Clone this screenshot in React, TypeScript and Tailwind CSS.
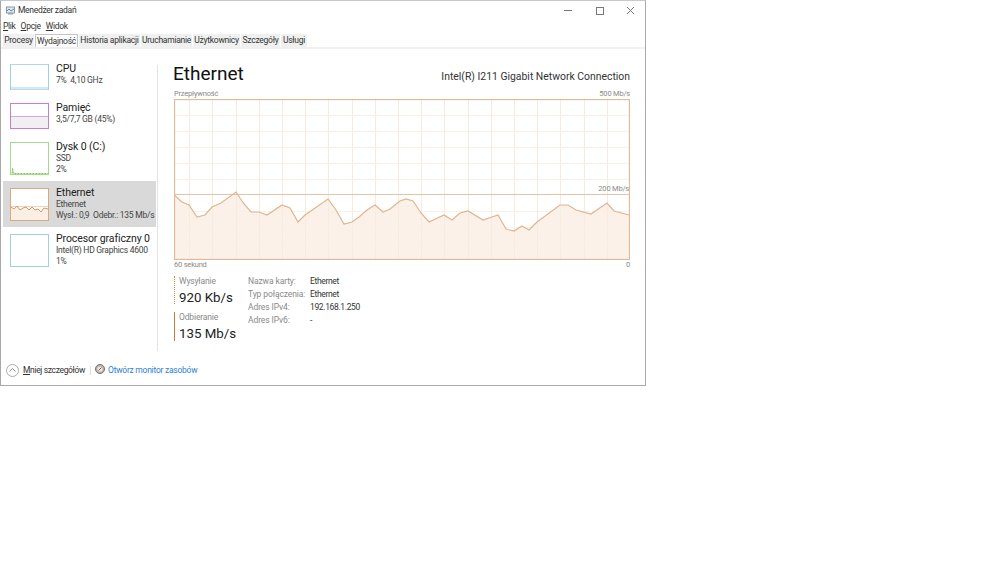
const font = { fontFamily: 'Roboto, "Noto Sans", sans-serif' };

const tabs = [
  { label: "Procesy", w: "w-[31px]" },
  { label: "Wydajność", w: "w-[43px]" },
  { label: "Historia aplikacji", w: "w-[61px]" },
  { label: "Uruchamianie", w: "w-[51px]" },
  { label: "Użytkownicy", w: "w-[47px]" },
  { label: "Szczegóły", w: "w-[39px]" },
  { label: "Usługi", w: "w-[26px]" },
];

const points = [
  [0, 96], [8, 103], [15, 106], [23, 118], [31, 116], [38, 108], [47, 104], [62, 93], [70, 105], [77, 113],
  [85, 113], [93, 116], [108, 106], [116, 109], [124, 123], [131, 116], [154, 100], [162, 111], [170, 125],
  [178, 123], [185, 118], [193, 111], [201, 106], [209, 113], [216, 110], [226, 102], [232, 100], [239, 102],
  [247, 114], [255, 123], [270, 116], [278, 121], [286, 114], [294, 112], [309, 121], [324, 116], [332, 130],
  [340, 132], [348, 127], [355, 131], [363, 123], [386, 106], [394, 106], [402, 111], [417, 115], [433, 104],
  [440, 112], [455, 116],
];

const line = points.map((p) => p.join(",")).join(" ");

const Chart = () => {
  const vertical = [15, 38, 62, 85, 108, 131, 154, 178, 201, 224, 247, 270, 294, 317, 340, 363, 386, 410, 433];
  const horizontal = [16, 32, 48, 64, 80, 112, 128, 144];
  return (
    <svg width="456" height="161" viewBox="0 0 456 161" className="block">
      <polygon points={`0,160 ${line} 455,160`} fill="#fbf1e9" />
      {vertical.map((x) => (
        <line key={x} x1={x + 0.5} y1="0" x2={x + 0.5} y2="160" stroke="#f7ebdf" />
      ))}
      {horizontal.map((y) => (
        <line key={y} x1="0" y1={y + 0.5} x2="455" y2={y + 0.5} stroke="#f9f0e8" />
      ))}
      <line x1="0" y1="95.5" x2="455" y2="95.5" stroke="#e5c3a5" />
      <polyline points={line} fill="none" stroke="#dfb591" strokeWidth="1.2" />
      <rect x="0.5" y="0.5" width="455" height="160" fill="none" stroke="#e2b999" strokeWidth="1.3" />
    </svg>
  );
};

const Thumb = ({ kind }: { kind: string }) => {
  if (kind === "cpu" || kind === "gpu") {
    return (
      <svg width="39" height="33" viewBox="0 0 39 33" className={`block shrink-0 ${kind === "cpu" ? "h-[26px]" : ""}`} preserveAspectRatio="none">
        <rect x="0.5" y="0.5" width="38" height="32" fill="#fff" stroke="#9fcdea" />
        {kind === "cpu" && <rect x="1" y="29" width="37" height="3" fill="#d5e8f4" />}
      </svg>
    );
  }
  if (kind === "mem") {
    return (
      <svg width="39" height="26" viewBox="0 0 39 26" className="block shrink-0">
        <rect x="1" y="14" width="37" height="11" fill="#f2eff2" />
        <line x1="1" y1="13.5" x2="38" y2="13.5" stroke="#d6a8dd" />
        <rect x="0.5" y="0.5" width="38" height="25" fill="none" stroke="#c77fd4" />
      </svg>
    );
  }
  if (kind === "disk") {
    return (
      <svg width="39" height="33" viewBox="0 0 39 33" className="block shrink-0">
        <rect x="0.5" y="0.5" width="38" height="32" fill="#fff" stroke="#a6d98c" />
        <polyline points="2,31.5 2.5,26 3.5,31.5 38,31.5" fill="#cfeabf" stroke="#7cc455" strokeWidth="1" strokeDasharray="2 1" />
      </svg>
    );
  }
  return (
    <svg width="39" height="33" viewBox="0 0 39 33" className="block shrink-0">
      <rect x="0.5" y="0.5" width="38" height="32" fill="#fff" stroke="#d8a980" />
      <polygon points="1,19 4,21 7,18 10,22 13,20 16,19 19,22 22,19 25,22 28,21 31,24 34,20 38,21 38,32 1,32" fill="#fbeee3" />
      <line x1="1" y1="18.5" x2="38" y2="18.5" stroke="#ecd5c0" />
      <polyline points="1,19 4,21 7,18 10,22 13,20 16,19 19,22 22,19 25,22 28,21 31,24 34,20 38,21" fill="none" stroke="#cf9a70" strokeWidth="1" />
    </svg>
  );
};

const SideItem = ({ kind, name, lines, active }: { kind: string; name: string; lines: string[]; active?: boolean }) => (
  <div className={`flex items-start gap-[7px] pl-[7px] h-[46px] pt-[6px] ${active ? "bg-[#d9d9d9]" : ""}`}>
    <div className="mt-[1px]">
      <Thumb kind={kind} />
    </div>
    <div className="flex flex-col whitespace-nowrap -mt-[1px]">
      <span className="text-[10.5px] tracking-[-0.1px] leading-[13px] text-[#222]">{name}</span>
      {lines.map((l) => (
        <span key={l} className="text-[8.5px] tracking-[-0.25px] leading-[11px] text-[#444] whitespace-pre">{l}</span>
      ))}
    </div>
  </div>
);

const Info = ({ label, value }: { label: string; value: string }) => (
  <div className="flex h-[13px] items-center">
    <span className="w-[62px] text-[8.5px] tracking-[-0.1px] text-[#8a8a8a]">{label}</span>
    <span className="text-[8.5px] tracking-[-0.35px] text-[#333]">{value}</span>
  </div>
);

export default function App() {
  return (
    <div className="w-[999px] h-[562px] bg-white" style={font}>
      <div className="w-[646px] h-[386px] border border-[#a9a9a9] border-t-[#c8c8c8] flex flex-col">
        {/* title bar */}
        <div className="h-[19px] flex items-center pl-[5px] shrink-0">
          <svg width="9" height="9" viewBox="0 0 9 9" className="mr-[3px]">
            <rect x="0.5" y="1" width="8" height="6" fill="#dfe8ee" stroke="#8b9aa5" />
            <polyline points="1,5 3,3 5,5 8,3" fill="none" stroke="#5b8bb0" />
            <rect x="2" y="7" width="5" height="1.5" fill="#9aa4ab" />
          </svg>
          <span className="text-[8.5px] tracking-[-0.3px] text-[#333]">Menedżer zadań</span>
          <div className="ml-auto flex items-center gap-[22px] pr-[10px]">
            <svg width="9" height="9" viewBox="0 0 9 9"><line x1="0" y1="4.5" x2="8" y2="4.5" stroke="#777" /></svg>
            <svg width="9" height="9" viewBox="0 0 9 9"><rect x="1.5" y="1.5" width="7" height="7" fill="none" stroke="#777" /></svg>
            <svg width="9" height="9" viewBox="0 0 9 9"><path d="M1 1 L8 8 M8 1 L1 8" stroke="#777" fill="none" /></svg>
          </div>
        </div>
        {/* menu */}
        <div className="h-[13px] flex items-center gap-[5px] pl-[2px] text-[8.5px] tracking-[-0.3px] text-[#333] shrink-0">
          <span><u>P</u>lik</span>
          <span><u>O</u>pcje</span>
          <span><u>W</u>idok</span>
        </div>
        {/* tabs */}
        <div className="h-[16px] flex items-end pl-[2px] shrink-0 border-b-2 border-[#f0f0f0] gap-[1px]">
          {tabs.map((t) => (
            <div
              key={t.label}
              className={`${t.w} h-[13px] flex items-center justify-center text-[8.5px] tracking-[-0.25px] whitespace-nowrap text-[#333] ${
                t.label === "Wydajność" ? "bg-white border border-[#c4c4c4] border-b-0" : "bg-[#f0f0f0]"
              }`}
            >
              {t.label}
            </div>
          ))}
        </div>
        {/* main */}
        <div className="flex h-[303px] shrink-0">
          <div className="w-[153px] ml-[2px] mr-[1px] h-[287px] mt-[8px] flex flex-col shrink-0">
            <SideItem kind="cpu" name="CPU" lines={["7%  4,10 GHz"]} />
            <div className="-mt-[7px]" />
            <SideItem kind="mem" name="Pamięć" lines={["3,5/7,7 GB (45%)"]} />
            <div className="-mt-[7px]" />
            <SideItem kind="disk" name="Dysk 0 (C:)" lines={["SSD", "2%"]} />
            <SideItem kind="eth" name="Ethernet" lines={["Ethernet", "Wysł.: 0,9  Odebr.: 135 Mb/s"]} active />
            <SideItem kind="gpu" name="Procesor graficzny 0" lines={["Intel(R) HD Graphics 4600", "1%"]} />
          </div>
          <div className="w-[1px] h-[286px] mt-[16px] bg-[#e4e4e4] shrink-0" />
          <div className="w-[457px] ml-[15px] mt-[13px] flex flex-col shrink-0">
            <div className="flex items-end justify-between h-[23px]">
              <span className="text-[19px] leading-[23px] text-[#111]">Ethernet</span>
              <span className="text-[10.4px] leading-[14px] text-[#333] mb-[1px]">Intel(R) I211 Gigabit Network Connection</span>
            </div>
            <div className="flex justify-between items-center h-[14px] mt-[2px] pl-[1px] text-[7.5px] tracking-[-0.2px] text-[#8a8a8a]">
              <span>Przepływność</span>
              <span>500 Mb/s</span>
            </div>
            <div className="relative mt-[-2px] ml-[1px] w-[456px]">
              <Chart />
              <span className="absolute right-[1px] top-[85px] text-[7.5px] tracking-[-0.2px] leading-[10px] text-[#8a8a8a]">200 Mb/s</span>
            </div>
            <div className="flex justify-between pl-[1px] text-[7.5px] tracking-[-0.2px] leading-[10px] text-[#8a8a8a]">
              <span>60 sekund</span>
              <span>0</span>
            </div>
            <div className="flex mt-[6px] ml-[1px]">
              <div className="w-[74px] flex flex-col gap-[8px]">
                <div className="border-l border-dotted border-[#e08a4a] h-[28px] pl-[4px] flex flex-col">
                  <span className="text-[8.5px] tracking-[-0.15px] leading-[10px] text-[#8a8a8a]">Wysyłanie</span>
                  <span className="text-[13.3px] leading-[24px] text-[#222]">920 Kb/s</span>
                </div>
                <div className="border-l border-[#c87a3c] h-[29px] pl-[4px] flex flex-col">
                  <span className="text-[8.5px] tracking-[-0.15px] leading-[10px] text-[#8a8a8a]">Odbieranie</span>
                  <span className="text-[13.3px] leading-[24px] text-[#222]">135 Mb/s</span>
                </div>
              </div>
              <div className="flex flex-col -mt-[1px]">
                <Info label="Nazwa karty:" value="Ethernet" />
                <Info label="Typ połączenia:" value="Ethernet" />
                <Info label="Adres IPv4:" value="192.168.1.250" />
                <Info label="Adres IPv6:" value="-" />
              </div>
            </div>
          </div>
        </div>
        {/* footer */}
        <div className="flex items-center pl-[5px] h-[20px] mt-[8px] shrink-0">
          <svg width="13" height="13" viewBox="0 0 13 13" className="mr-[4px]">
            <circle cx="6.5" cy="6.5" r="6" fill="#fff" stroke="#aaa" />
            <polyline points="3.5,7.5 6.5,4.5 9.5,7.5" fill="none" stroke="#888" />
          </svg>
          <span className="text-[8.5px] tracking-[-0.35px] text-[#333]"><u>M</u>niej szczegółów</span>
          <div className="w-[1px] h-[9px] bg-[#ddd] ml-[5px] mr-[4px]" />
          <svg width="10" height="10" viewBox="0 0 10 10" className="mr-[3px] mb-[2px]">
            <circle cx="5" cy="5" r="4.5" fill="#b9b4ae" stroke="#77716b" />
            <circle cx="5" cy="5" r="2.6" fill="#e9e6e2" />
            <path d="M3.5 6.5 L6.5 3.5" stroke="#b5473a" />
          </svg>
          <span className="text-[8.5px] tracking-[-0.25px] text-[#2f7fd0]">Otwórz monitor zasobów</span>
        </div>
      </div>
    </div>
  );
}
